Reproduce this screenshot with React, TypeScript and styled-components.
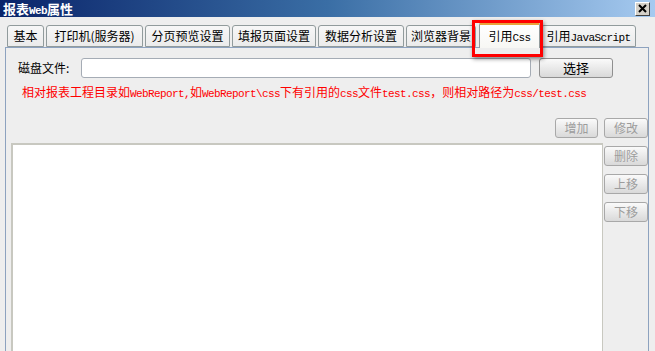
import React from "react";
import styled, { createGlobalStyle } from "styled-components";

const GlobalStyle = createGlobalStyle`
  html, body {
    margin: 0;
    padding: 0;
    background: #eeeeee;
  }
  body {
    font-family: "Noto Sans CJK SC", "Liberation Sans", sans-serif;
    font-size: 12px;
    line-height: 14px;
    color: #000;
  }
`;

const Window = styled.div`
  position: relative;
  width: 655px;
  height: 351px;
  overflow: hidden;
  background: #eeeeee;
`;

const TitleBar = styled.div`
  height: 17px;
  display: flex;
  align-items: center;
  justify-content: space-between;
  padding: 0 5px 0 3px;
  background: linear-gradient(to right, #0a246a 0%, #3a6ea5 50%, #a6caf0 100%);
`;

const Title = styled.div`
  color: #fff;
  font-weight: bold;
  font-size: 13px;
  line-height: 17px;
  height: 17px;
`;

const Latin = styled.span<{ $bold?: boolean }>`
  font-family: "Liberation Mono", monospace;
  font-size: 11px;
  letter-spacing: -0.6px;
  font-weight: ${(p) => (p.$bold ? "bold" : "normal")};
`;

const CloseButton = styled.div`
  width: 15px;
  height: 14px;
  box-sizing: border-box;
  background: #d4d0c8;
  border: 1px solid;
  border-color: #ffffff #404040 #404040 #ffffff;
  display: flex;
  align-items: center;
  justify-content: center;
`;

const TabBar = styled.div`
  display: flex;
  align-items: flex-end;
  gap: 2px;
  height: 25px;
  margin-top: 5px;
  padding-left: 7px;
`;

const Tab = styled.div<{ $active?: boolean; $w: number }>`
  position: relative;
  box-sizing: border-box;
  width: ${(p) => p.$w}px;
  height: ${(p) => (p.$active ? "26px" : "22px")};
  margin: ${(p) => (p.$active ? "0 -1px -1px 1px" : "0")};
  padding-top: ${(p) => (p.$active ? "1px" : "0")};
  line-height: 20px;
  text-align: center;
  white-space: nowrap;
  border: 1px solid #919b9c;
  border-bottom: ${(p) => (p.$active ? "none" : "1px solid #919b9c")};
  border-top: ${(p) => (p.$active ? "3px solid #e8a33a" : "1px solid #919b9c")};
  border-radius: 3px 3px 0 0;
  background: ${(p) =>
    p.$active
      ? "linear-gradient(#ffffff, #f7f7f4)"
      : "linear-gradient(#f7f7f7, #ebebeb)"};
  z-index: ${(p) => (p.$active ? 2 : 0)};
`;

const Highlight = styled.div`
  position: absolute;
  left: -8px;
  top: -5px;
  width: 71px;
  height: 37px;
  box-sizing: border-box;
  border: 3px solid #ff0000;
  box-shadow: 1px 2px 4px rgba(0, 0, 0, 0.45);
  pointer-events: none;
`;

const Panel = styled.div`
  margin: 0 6px 0 5px;
  height: 320px;
  border: 1px solid #8da2bf;
  background: #eeeeee;
`;

const FileRow = styled.div`
  display: flex;
  align-items: center;
  height: 20px;
  margin-top: 10px;
  padding-left: 12px;
`;

const Label = styled.label`
  width: 63px;
`;

const PathInput = styled.div`
  width: 450px;
  height: 20px;
  box-sizing: border-box;
  background: #fff;
  border: 1px solid #a5acb5;
  border-radius: 3px;
`;

const Button = styled.div<{ $disabled?: boolean; $width?: number }>`
  width: ${(p) => p.$width ?? 44}px;
  height: 20px;
  box-sizing: border-box;
  display: flex;
  align-items: center;
  justify-content: center;
  border: 1px solid ${(p) => (p.$disabled ? "#a8a8a8" : "#8f8f8f")};
  border-radius: 3px;
  background: linear-gradient(#fafafa, #d9d9d9);
  color: ${(p) => (p.$disabled ? "#9c9c9c" : "#000")};
  font-size: ${(p) => (p.$disabled ? "12px" : "13px")};
`;

const ChooseButton = styled(Button)`
  margin-left: 8px;
`;

const Hint = styled.div`
  height: 14px;
  margin-top: 7px;
  padding-left: 16px;
  line-height: 14px;
  color: #ff0000;
  white-space: nowrap;
`;

const ListArea = styled.div`
  display: grid;
  grid-template-columns: 592px 44px;
  grid-template-rows: 20px auto;
  column-gap: 1px;
  row-gap: 5px;
  margin-top: 19px;
  padding-left: 5px;
`;

const AddButton = styled(Button)`
  justify-self: end;
  margin-right: 5px;
`;

const List = styled.div`
  height: 220px;
  background: #fff;
  border-top: 2px solid #c8c8c0;
  border-left: 2px solid #c8c8c0;
  border-right: 1px solid #c8c8c0;
`;

const SideButtons = styled.div`
  display: flex;
  flex-direction: column;
  gap: 8px;
  padding-top: 3px;
`;

const tabs: [string, number][] = [
  ["基本", 37],
  ["打印机(服务器)", 97],
  ["分页预览设置", 85],
  ["填报页面设置", 84],
  ["数据分析设置", 86],
  ["浏览器背景", 70],
];

export default function App() {
  return (
    <>
      <GlobalStyle />
      <Window>
        <TitleBar>
          <Title>
            报表<Latin $bold>Web</Latin>属性
          </Title>
          <CloseButton>
            <svg width="10" height="9" viewBox="0 0 10 9">
              <path d="M1 1 L8 8 M8 1 L1 8" stroke="#000" strokeWidth="2" />
            </svg>
          </CloseButton>
        </TitleBar>

        <TabBar>
          {tabs.map(([label, w]) => (
            <Tab key={label} $w={w}>
              {label}
            </Tab>
          ))}
          <Tab $active $w={61}>
            引用<Latin>Css</Latin>
            <Highlight />
          </Tab>
          <Tab $w={95}>
            引用<Latin>JavaScript</Latin>
          </Tab>
        </TabBar>

        <Panel>
          <FileRow>
            <Label>磁盘文件:</Label>
            <PathInput />
            <ChooseButton $width={74}>选择</ChooseButton>
          </FileRow>
          <Hint>
            相对报表工程目录如<Latin>WebReport,</Latin>如<Latin>WebReport\css</Latin>
            下有引用的<Latin>css</Latin>文件<Latin>test.css</Latin>，则相对路径为
            <Latin>css/test.css</Latin>
          </Hint>
          <ListArea>
            <AddButton $disabled $width={43}>增加</AddButton>
            <Button $disabled>修改</Button>
            <List />
            <SideButtons>
              <Button $disabled>删除</Button>
              <Button $disabled>上移</Button>
              <Button $disabled>下移</Button>
            </SideButtons>
          </ListArea>
        </Panel>
      </Window>
    </>
  );
}
